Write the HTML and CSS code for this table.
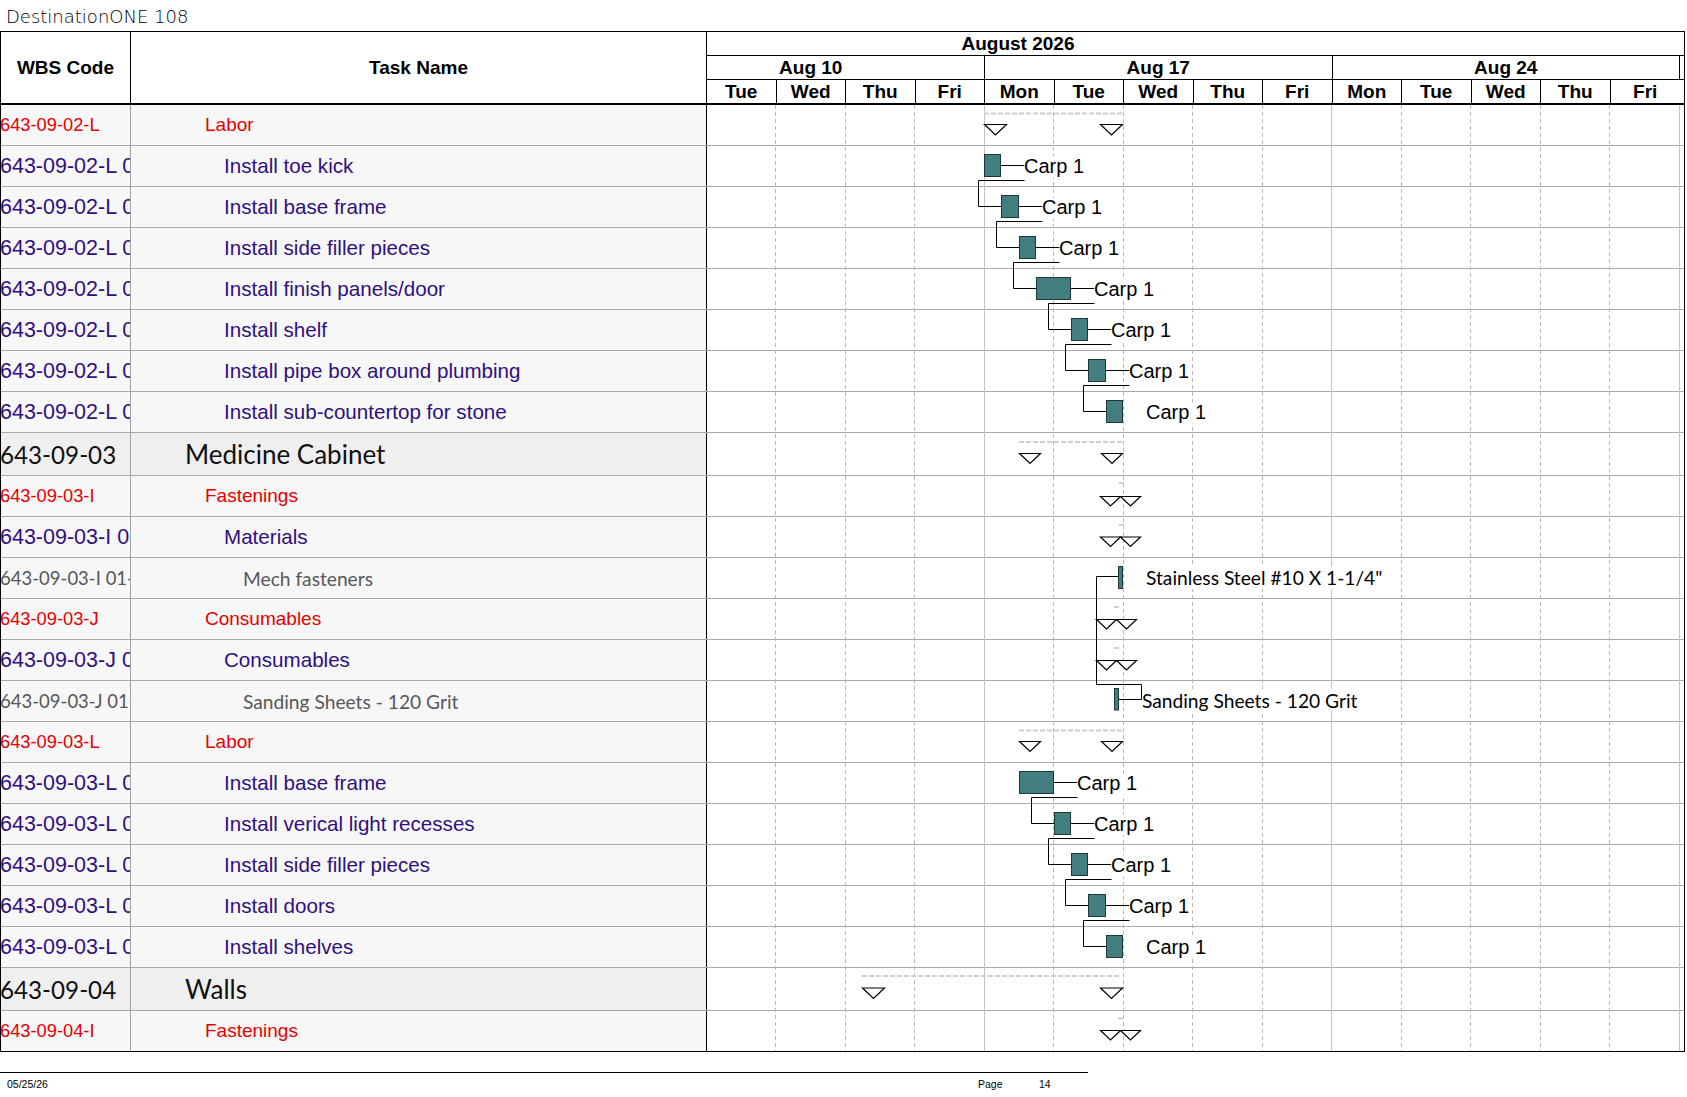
FILE: index.html
```html
<!DOCTYPE html>
<html lang="en">
<head>
<meta charset="utf-8">
<title>DestinationONE 108</title>
<link rel="stylesheet" href="styles.css">
</head>
<body>
<div class="title">DestinationONE 108</div>
<div class="sheet">
  <div class="head">
    <div class="hcell hwbs">WBS Code</div>
    <div class="hcell htask">Task Name</div>
    <div class="scale">
      <div class="month"><span>August 2026</span></div>
      <div class="weeks">
        <div class="wk wk1"><span>Aug 10</span></div>
        <div class="wk"><span>Aug 17</span></div>
        <div class="wk"><span>Aug 24</span></div>
        <div class="wk wkpad"></div>
      </div>
      <div class="days">
        <div class="day">Tue</div><div class="day">Wed</div><div class="day">Thu</div><div class="day">Fri</div>
        <div class="day">Mon</div><div class="day">Tue</div><div class="day">Wed</div><div class="day">Thu</div><div class="day">Fri</div>
        <div class="day">Mon</div><div class="day">Tue</div><div class="day">Wed</div><div class="day">Thu</div><div class="day">Fri</div>
        <div class="daypad"></div>
      </div>
    </div>
  </div>
  <div class="rows">
    <div class="row l2"><div class="c-wbs">643-09-02-L</div><div class="c-task">Labor</div><div class="c-gantt"></div></div>
    <div class="row l3"><div class="c-wbs">643-09-02-L 01</div><div class="c-task">Install toe kick</div><div class="c-gantt"></div></div>
    <div class="row l3"><div class="c-wbs">643-09-02-L 02</div><div class="c-task">Install base frame</div><div class="c-gantt"></div></div>
    <div class="row l3"><div class="c-wbs">643-09-02-L 03</div><div class="c-task">Install side filler pieces</div><div class="c-gantt"></div></div>
    <div class="row l3"><div class="c-wbs">643-09-02-L 04</div><div class="c-task">Install finish panels/door</div><div class="c-gantt"></div></div>
    <div class="row l3"><div class="c-wbs">643-09-02-L 05</div><div class="c-task">Install shelf</div><div class="c-gantt"></div></div>
    <div class="row l3"><div class="c-wbs">643-09-02-L 06</div><div class="c-task">Install pipe box around plumbing</div><div class="c-gantt"></div></div>
    <div class="row l3"><div class="c-wbs">643-09-02-L 07</div><div class="c-task">Install sub-countertop for stone</div><div class="c-gantt"></div></div>
    <div class="row l1"><div class="c-wbs">643-09-03</div><div class="c-task">Medicine Cabinet</div><div class="c-gantt"></div></div>
    <div class="row l2"><div class="c-wbs">643-09-03-I</div><div class="c-task">Fastenings</div><div class="c-gantt"></div></div>
    <div class="row l3"><div class="c-wbs">643-09-03-I 01</div><div class="c-task">Materials</div><div class="c-gantt"></div></div>
    <div class="row l4"><div class="c-wbs">643-09-03-I 01-01</div><div class="c-task">Mech fasteners</div><div class="c-gantt"></div></div>
    <div class="row l2"><div class="c-wbs">643-09-03-J</div><div class="c-task">Consumables</div><div class="c-gantt"></div></div>
    <div class="row l3"><div class="c-wbs">643-09-03-J 01</div><div class="c-task">Consumables</div><div class="c-gantt"></div></div>
    <div class="row l4"><div class="c-wbs">643-09-03-J 01-01</div><div class="c-task">Sanding Sheets - 120 Grit</div><div class="c-gantt"></div></div>
    <div class="row l2"><div class="c-wbs">643-09-03-L</div><div class="c-task">Labor</div><div class="c-gantt"></div></div>
    <div class="row l3"><div class="c-wbs">643-09-03-L 01</div><div class="c-task">Install base frame</div><div class="c-gantt"></div></div>
    <div class="row l3"><div class="c-wbs">643-09-03-L 02</div><div class="c-task">Install verical light recesses</div><div class="c-gantt"></div></div>
    <div class="row l3"><div class="c-wbs">643-09-03-L 03</div><div class="c-task">Install side filler pieces</div><div class="c-gantt"></div></div>
    <div class="row l3"><div class="c-wbs">643-09-03-L 04</div><div class="c-task">Install doors</div><div class="c-gantt"></div></div>
    <div class="row l3"><div class="c-wbs">643-09-03-L 05</div><div class="c-task">Install shelves</div><div class="c-gantt"></div></div>
    <div class="row l1"><div class="c-wbs">643-09-04</div><div class="c-task">Walls</div><div class="c-gantt"></div></div>
    <div class="row l2 last"><div class="c-wbs">643-09-04-I</div><div class="c-task">Fastenings</div><div class="c-gantt"></div></div>

    <svg class="gantt" viewBox="707 105 977 946" width="977" height="946" xmlns="http://www.w3.org/2000/svg">
      <path class="grid-d" d="M775.5 105V1051M845.5 105V1051M914.5 105V1051M1053.5 105V1051M1123.5 105V1051M1192.5 105V1051M1262.5 105V1051M1401.5 105V1051M1470.5 105V1051M1540.5 105V1051M1609.5 105V1051"/>
      <path class="grid-s" d="M984.5 105V1051M1331.5 105V1051M1679.5 105V1051"/>

      <path class="sum" d="M984 113.5H1123M1019 442H1123M1019 730.5H1123M862 976H1121"/>
      <path class="sum" d="M1119 483H1124M1119 525H1124M1114 607H1119M1114 648H1119M1118 1018.5H1123"/>

      <g class="tri">
        <polygon points="984.5,124.5 1006.5,124.5 995.5,135"/>
        <polygon points="1100.5,124.5 1122.5,124.5 1111.5,135"/>
        <polygon points="1019.5,453.5 1040.5,453.5 1030,463.5"/>
        <polygon points="1101.5,453.5 1122.5,453.5 1112,463.5"/>
        <polygon points="1100.5,496.5 1120.5,496.5 1110.5,506"/>
        <polygon points="1120.5,496.5 1140.5,496.5 1130.5,506"/>
        <polygon points="1100.5,537 1120.5,537 1110.5,546.5"/>
        <polygon points="1120.5,537 1140.5,537 1130.5,546.5"/>
        <polygon points="1096.5,619.5 1116.5,619.5 1106.5,629"/>
        <polygon points="1116.5,619.5 1136.5,619.5 1126.5,629"/>
        <polygon points="1096.5,660.5 1116.5,660.5 1106.5,670"/>
        <polygon points="1116.5,660.5 1136.5,660.5 1126.5,670"/>
        <polygon points="1019.5,741.5 1040.5,741.5 1030,751.5"/>
        <polygon points="1101.5,741.5 1122.5,741.5 1112,751.5"/>
        <polygon points="862.5,988 884.5,988 873.5,998.5"/>
        <polygon points="1100.5,988 1122.5,988 1111.5,998.5"/>
        <polygon points="1100.5,1030.5 1120.5,1030.5 1110.5,1040"/>
        <polygon points="1120.5,1030.5 1140.5,1030.5 1130.5,1040"/>
      </g>

      <path class="cn" d="M1001 165.5H1024.5M1019 206.5H1042.5M1036 247.5H1059.5M1071 288.5H1094.5M1088 329.5H1111.5M1106 370.5H1129.5M1054 782.5H1077.5M1071 823.5H1094.5M1088 864.5H1111.5M1106 905.5H1129.5"/>
      <path class="cn" d="M1024.5 180.5H978.5V206.5H1001M1042.5 221.5H996.5V247.5H1019M1059.5 262.5H1013.5V288.5H1036M1094.5 303.5H1048.5V329.5H1071M1111.5 344.5H1065.5V370.5H1088M1129.5 385.5H1083.5V411.5H1106"/>
      <path class="cn" d="M1077.5 797.5H1031.5V823.5H1054M1094.5 838.5H1048.5V864.5H1071M1111.5 879.5H1065.5V905.5H1088M1129.5 920.5H1083.5V946.5H1106"/>
      <path class="cn" d="M1118.5 576.5H1096.5V684.5H1141.5V699.5H1118.5"/>

      <g class="bar">
        <rect x="984.5" y="154.5" width="16" height="22"/>
        <rect x="1001.5" y="195.5" width="17" height="22"/>
        <rect x="1019.5" y="236.5" width="16" height="22"/>
        <rect x="1036.5" y="277.5" width="34" height="22"/>
        <rect x="1071.5" y="318.5" width="16" height="22"/>
        <rect x="1088.5" y="359.5" width="17" height="22"/>
        <rect x="1106.5" y="400.5" width="16" height="22"/>
        <rect x="1019.5" y="771.5" width="34" height="22"/>
        <rect x="1054.5" y="812.5" width="16" height="22"/>
        <rect x="1071.5" y="853.5" width="16" height="22"/>
        <rect x="1088.5" y="894.5" width="17" height="22"/>
        <rect x="1106.5" y="935.5" width="16" height="22"/>
        <rect x="1118.5" y="566.5" width="4" height="22"/>
        <rect x="1114.5" y="688.5" width="4" height="21.5"/>
      </g>

      <g class="lbg">
        <rect x="1024.5" y="156.5" width="61" height="21"/>
        <rect x="1042.5" y="197.5" width="61" height="21"/>
        <rect x="1059.5" y="238.5" width="61" height="21"/>
        <rect x="1094.5" y="279.5" width="61" height="21"/>
        <rect x="1111.5" y="320.5" width="61" height="21"/>
        <rect x="1129.5" y="361.5" width="61" height="21"/>
        <rect x="1146.5" y="402.5" width="61" height="21"/>
        <rect x="1077.5" y="773.5" width="61" height="21"/>
        <rect x="1094.5" y="814.5" width="61" height="21"/>
        <rect x="1111.5" y="855.5" width="61" height="21"/>
        <rect x="1129.5" y="896.5" width="61" height="21"/>
        <rect x="1146.5" y="937.5" width="61" height="21"/>
        <rect x="1146" y="567" width="232" height="22"/>
        <rect x="1142.5" y="689" width="208" height="22"/>
      </g>

      <g class="lb">
        <text x="1024" y="172.5">Carp 1</text>
        <text x="1042" y="213.5">Carp 1</text>
        <text x="1059" y="254.5">Carp 1</text>
        <text x="1094" y="295.5">Carp 1</text>
        <text x="1111" y="336.5">Carp 1</text>
        <text x="1129" y="377.5">Carp 1</text>
        <text x="1146" y="418.5">Carp 1</text>
        <text x="1077" y="789.5">Carp 1</text>
        <text x="1094" y="830.5">Carp 1</text>
        <text x="1111" y="871.5">Carp 1</text>
        <text x="1129" y="912.5">Carp 1</text>
        <text x="1146" y="953.5">Carp 1</text>
      </g>
      <g class="lb2">
        <text x="1146" y="585">Stainless Steel #10 X 1-1/4"</text>
        <text x="1142" y="707.5">Sanding Sheets - 120 Grit</text>
      </g>
    </svg>
  </div>
</div>
<div class="footer">
  <span class="f-date">05/25/26</span>
  <span class="f-page">Page</span>
  <span class="f-num">14</span>
</div>
</body>
</html>
```

FILE: styles.css
```css
html, body {
  margin: 0;
  padding: 0;
  background: #fff;
  overflow: hidden;
}

body {
  width: 1687px;
  height: 1097px;
  font-family: "Liberation Sans", Arial, sans-serif;
  color: #000;
}

.title {
  height: 31px;
  box-sizing: border-box;
  padding: 2px 0 0 6px;
  line-height: 29px;
  font-family: "DejaVu Sans", sans-serif;
  font-weight: 200;
  font-size: 18px;
  color: #000;
  white-space: nowrap;
}

.sheet {
  width: 1685px;
  box-sizing: border-box;
  border: 1px solid #000;
  background: #fff;
}

/* ---------- header ---------- */
.head {
  display: grid;
  grid-template-columns: 130px 576px 977px;
  height: 73px;
  box-sizing: border-box;
  border-bottom: 2px solid #000;
  font-weight: bold;
  font-size: 19px;
}

.hcell {
  display: flex;
  align-items: center;
  justify-content: center;
  border-right: 1px solid #000;
  box-sizing: border-box;
}

.scale {
  display: flex;
  flex-direction: column;
}

.month {
  height: 24px;
  box-sizing: border-box;
  border-bottom: 1px solid #000;
  display: flex;
  align-items: center;
}

.month span {
  width: 622px;
  text-align: center;
  flex-shrink: 0;
}

.weeks {
  height: 24px;
  box-sizing: border-box;
  border-bottom: 1px solid #000;
  display: grid;
  grid-template-columns: 278px 347.5px 347.5px 4px;
}

.wk {
  display: flex;
  align-items: center;
  justify-content: center;
  border-right: 1px solid #000;
  box-sizing: border-box;
  overflow: hidden;
}

.wk span {
  flex-shrink: 0;
}

.wk1 {
  justify-content: flex-end;
}

.wk1 span {
  width: 346.5px;
  text-align: center;
}

.wkpad {
  border-right: none;
}

.days {
  height: 23px;
  display: grid;
  grid-template-columns: repeat(14, 69.5px) 4px;
}

.day {
  display: flex;
  align-items: center;
  justify-content: center;
  border-right: 1px solid #000;
  box-sizing: border-box;
}

.day:nth-child(14) {
  border-right: none;
}

/* ---------- body rows ---------- */
.rows {
  position: relative;
}

.row {
  display: grid;
  grid-template-columns: 130px 576px 977px;
  height: 41px;
  box-sizing: border-box;
  border-bottom: 1px solid #a9a9a9;
}

.row.l1 {
  height: 43px;
}

.row.last {
  height: 40px;
  border-bottom: none;
}

.c-wbs,
.c-task {
  display: flex;
  align-items: center;
  white-space: nowrap;
  overflow: hidden;
  box-sizing: border-box;
  background: #f7f7f7;
}

.c-wbs {
  border-right: 1px solid #a3a3a3;
  text-indent: -1px;
}

.c-task {
  border-right: 1px solid #000;
}

.c-gantt {
  background: #fff;
}

.l1 .c-wbs,
.l1 .c-task {
  background: #efefef;
  font-family: Lato, "Open Sans", sans-serif;
  font-size: 26px;
  color: #111;
}

.l1 .c-wbs {
  font-size: 24.2px;
}

.l1 .c-task {
  padding-left: 54px;
}

.l2 .c-wbs,
.l2 .c-task {
  font-size: 19px;
  color: #e40000;
}

.l2 .c-wbs {
  font-size: 18.3px;
}

.l2 .c-task {
  padding-left: 74px;
}

.l3 .c-wbs,
.l3 .c-task {
  font-size: 20.6px;
  color: #30107f;
}

.l3 .c-wbs {
  font-size: 21.5px;
}

.l3 .c-task {
  padding-left: 93px;
}

.l4 .c-wbs,
.l4 .c-task {
  font-family: Lato, "Open Sans", sans-serif;
  font-size: 19.2px;
  color: #575757;
}

.l4 .c-wbs {
  font-size: 18.5px;
}

.l4 .c-task {
  padding-left: 112px;
}

/* ---------- gantt overlay ---------- */
.gantt {
  position: absolute;
  left: 706px;
  top: 0;
  display: block;
}

.grid-d {
  stroke: #b9b9b9;
  stroke-width: 1;
  stroke-dasharray: 4 3;
  fill: none;
}

.grid-s {
  stroke: #c3c3c3;
  stroke-width: 1;
  fill: none;
}

.sum {
  stroke: #cfcfcf;
  stroke-width: 2;
  stroke-dasharray: 5 2;
  fill: none;
}

.tri polygon {
  fill: #fff;
  stroke: #000;
  stroke-width: 1.2;
  stroke-linejoin: miter;
}

.cn {
  stroke: #000;
  stroke-width: 1;
  fill: none;
}

.bar rect {
  fill: #427e80;
  stroke: #1c393a;
  stroke-width: 1;
}

.lbg rect {
  fill: #fff;
}

.lb text {
  font-family: "Liberation Sans", Arial, sans-serif;
  font-size: 20px;
  fill: #000;
}

.lb2 text {
  font-family: Lato, "Open Sans", sans-serif;
  font-size: 19.2px;
  fill: #000;
}

/* ---------- footer ---------- */
.footer {
  margin-top: 20px;
  width: 1088px;
  box-sizing: border-box;
  border-top: 1px solid #000;
  padding: 5px 0 0 7px;
  display: flex;
  font-size: 10.5px;
  line-height: 12px;
  color: #000;
}

.f-date {
  width: 971px;
}

.f-page {
  width: 61px;
}
```
